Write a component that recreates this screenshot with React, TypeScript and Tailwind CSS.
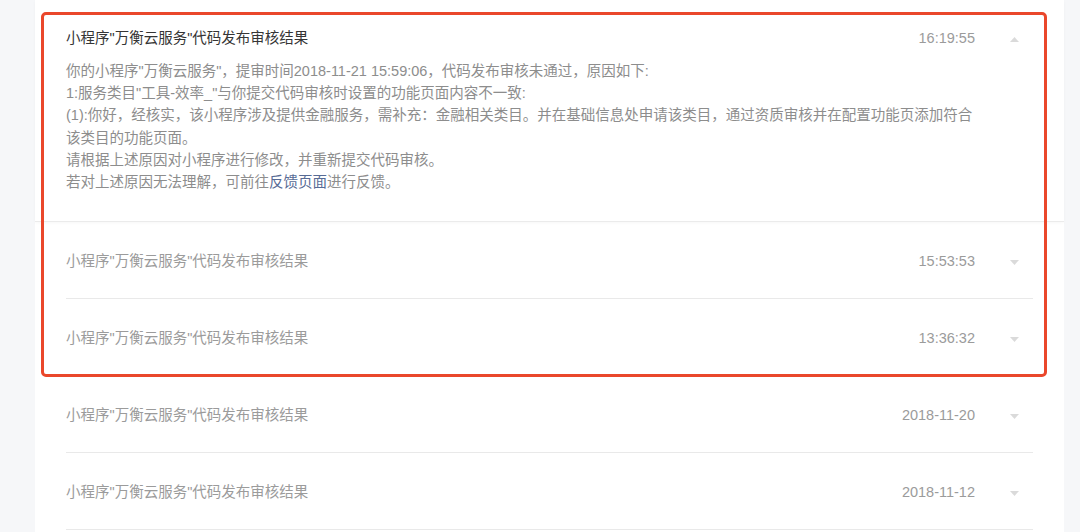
const FONT = { fontFamily: '"Liberation Sans", "Noto Sans CJK SC", sans-serif' };

const rows = [
  { time: "15:53:53" },
  { time: "13:36:32" },
  { time: "2018-11-20" },
  { time: "2018-11-12" },
];

function Caret({ up }: { up?: boolean }) {
  return (
    <svg width="9" height="5" viewBox="0 0 9 5" className="block">
      {up ? <path d="M0 5 L4.5 0 L9 5 Z" fill="#dadada" /> : <path d="M0 0 L4.5 5 L9 0 Z" fill="#dadada" />}
    </svg>
  );
}

export default function App() {
  const title = '小程序"万衡云服务"代码发布审核结果';

  return (
    <div className="relative w-full h-[532px] overflow-hidden bg-[#f6f7f9] text-[14.5px]" style={FONT}>
      <div className="ml-[35px] w-[1029px] h-full bg-white">
        {/* expanded message */}
        <div className="px-[31px] pt-[28px] pb-[28px] border-b border-[#ebebeb] shadow-[0_1px_3px_rgba(0,0,0,0.03)]">
          <div className="flex items-center h-[22px]">
            <div className="flex-1 text-[#353535]">{title}</div>
            <div className="text-[#9b9b9b]">16:19:55</div>
            <div className="w-[58px] flex justify-end pr-[14px]">
              <Caret up />
            </div>
          </div>
          <div className="mt-[10px] pr-[58px] leading-[22.2px] text-[#8d8d8d]">
            <p>你的小程序"万衡云服务"，提审时间2018-11-21 15:59:06，代码发布审核未通过，原因如下:</p>
            <p>1:服务类目"工具-效率_"与你提交代码审核时设置的功能页面内容不一致:</p>
            <p>(1):你好，经核实，该小程序涉及提供金融服务，需补充：金融相关类目。并在基础信息处申请该类目，通过资质审核并在配置功能页添加符合该类目的功能页面。</p>
            <p>请根据上述原因对小程序进行修改，并重新提交代码审核。</p>
            <p>
              若对上述原因无法理解，可前往<span className="text-[#576b95]">反馈页面</span>进行反馈。
            </p>
          </div>
        </div>

        {/* collapsed messages */}
        <div className="px-[31px]">
          {rows.map((r) => (
            <div key={r.time} className="flex items-center h-[77px] pt-[4px] border-b border-[#e9e9e9]">
              <div className="flex-1 text-[#9b9b9b]">{title}</div>
              <div className="text-[#9b9b9b]">{r.time}</div>
              <div className="w-[58px] flex justify-end pr-[14px]">
                <Caret />
              </div>
            </div>
          ))}
        </div>
      </div>

      {/* highlight annotation */}
      <div className="absolute left-[41px] top-[12px] w-[1006px] h-[365px] border-[3px] border-[#ea472b] rounded-[5px] pointer-events-none" />
    </div>
  );
}
